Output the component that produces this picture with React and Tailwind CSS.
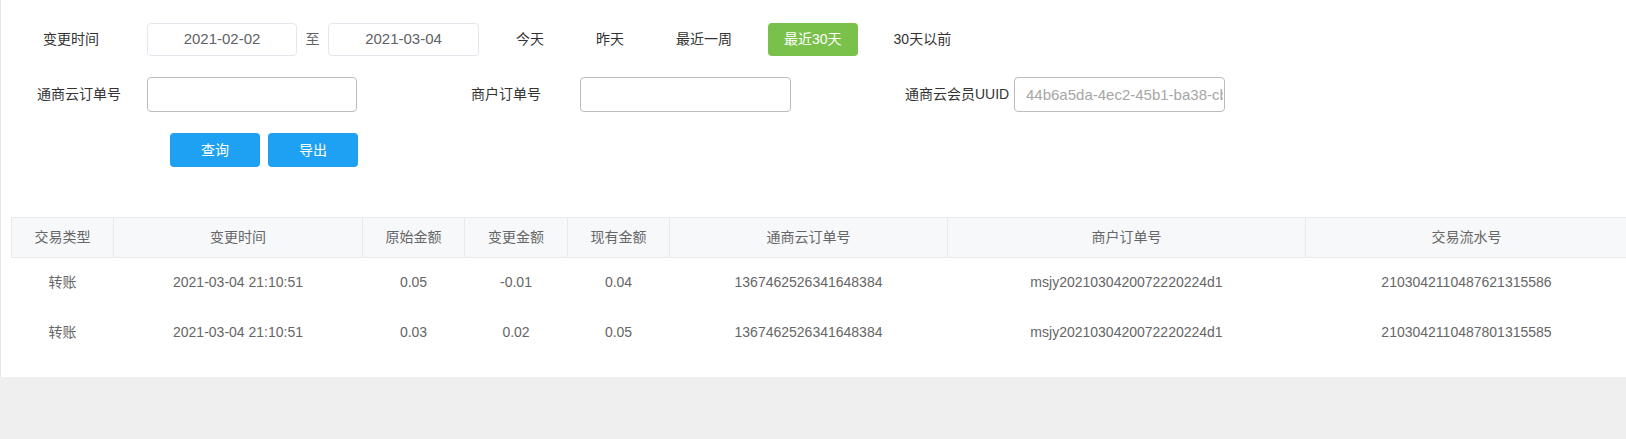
export default function App() {
  const headers = ["交易类型", "变更时间", "原始金额", "变更金额", "现有金额", "通商云订单号", "商户订单号", "交易流水号"];
  const widths = [102, 249, 102, 103, 102, 278, 358, 322];
  const rows = [
    ["转账", "2021-03-04 21:10:51", "0.05", "-0.01", "0.04", "1367462526341648384", "msjy2021030420072220224d1", "2103042110487621315586"],
    ["转账", "2021-03-04 21:10:51", "0.03", "0.02", "0.05", "1367462526341648384", "msjy2021030420072220224d1", "2103042110487801315585"],
  ];
  const quick = ["今天", "昨天", "最近一周", "最近30天", "30天以前"];
  return (
    <div className="w-[1626px] h-[439px] overflow-hidden bg-[#eeefee] font-['Liberation_Sans','Noto_Sans_CJK_SC',sans-serif] text-[14px] leading-normal">
      <div className="bg-white border-l border-[#e6e6e6] h-[377px] pt-[23px]">
        {/* row 1 */}
        <div className="flex items-center h-[33px]">
          <div className="w-[146px] pl-[42px] text-[#333]">变更时间</div>
          <div className="w-[150px] h-[33px] border border-[#e4e7ed] rounded-[4px] flex items-center justify-center text-[15px] text-[#606266]">2021-02-02</div>
          <div className="w-[31px] text-center text-[#606266]">至</div>
          <div className="w-[151px] h-[33px] border border-[#e4e7ed] rounded-[4px] flex items-center justify-center text-[15px] text-[#606266]">2021-03-04</div>
          <div className="flex items-center gap-[20px] ml-[21px]">
            {quick.map((q) => (
              <div
                key={q}
                className={
                  q === "最近30天"
                    ? "h-[33px] px-[16px] rounded-[4px] flex items-center bg-[#7ac14c] text-white"
                    : "h-[33px] px-[16px] rounded-[4px] flex items-center text-[#333]"
                }
              >
                {q}
              </div>
            ))}
          </div>
        </div>
        {/* row 2 */}
        <div className="flex items-center h-[35px] mt-[21px]">
          <div className="w-[146px] pl-[36px] text-[#333]">通商云订单号</div>
          <input className="w-[210px] h-[35px] border border-[#bcbcbc] rounded-[4px] px-[11px] outline-none" />
          <div className="w-[223px] pl-[114px] text-[#333]">商户订单号</div>
          <input className="w-[211px] h-[35px] border border-[#bcbcbc] rounded-[4px] px-[11px] outline-none" />
          <div className="w-[223px] pl-[114px] text-[#333] whitespace-nowrap">通商云会员UUID</div>
          <input
            placeholder="44b6a5da-4ec2-45b1-ba38-cb7e21f90d4a"
            className="w-[211px] h-[35px] border border-[#bcbcbc] rounded-[4px] pl-[11px] pr-[1px] text-[15px] outline-none placeholder:text-[#a6a6a6]"
          />
        </div>
        {/* row 3 */}
        <div className="flex items-center h-[34px] mt-[21px] ml-[169px] gap-[8px]">
          <button className="w-[90px] h-[34px] rounded-[4px] bg-[#1fa1f3] text-white">查询</button>
          <button className="w-[90px] h-[34px] rounded-[4px] bg-[#1fa1f3] text-white">导出</button>
        </div>
        {/* table */}
        <table className="ml-[10px] mt-[50px] table-fixed border-collapse w-[1616px]">
          <colgroup>
            {widths.map((w, i) => (
              <col key={i} style={{ width: w }} />
            ))}
          </colgroup>
          <thead>
            <tr className="bg-[#f7f8fa]">
              {headers.map((h) => (
                <th key={h} className="h-[40px] border border-[#e8eaed] font-normal text-[#666] text-center p-0">
                  {h}
                </th>
              ))}
            </tr>
          </thead>
          <tbody>
            {rows.map((r, i) => (
              <tr key={i}>
                {r.map((c, j) => (
                  <td key={j} className="h-[50px] text-center text-[#666] p-0 whitespace-nowrap">
                    {c}
                  </td>
                ))}
              </tr>
            ))}
          </tbody>
        </table>
      </div>
    </div>
  );
}
